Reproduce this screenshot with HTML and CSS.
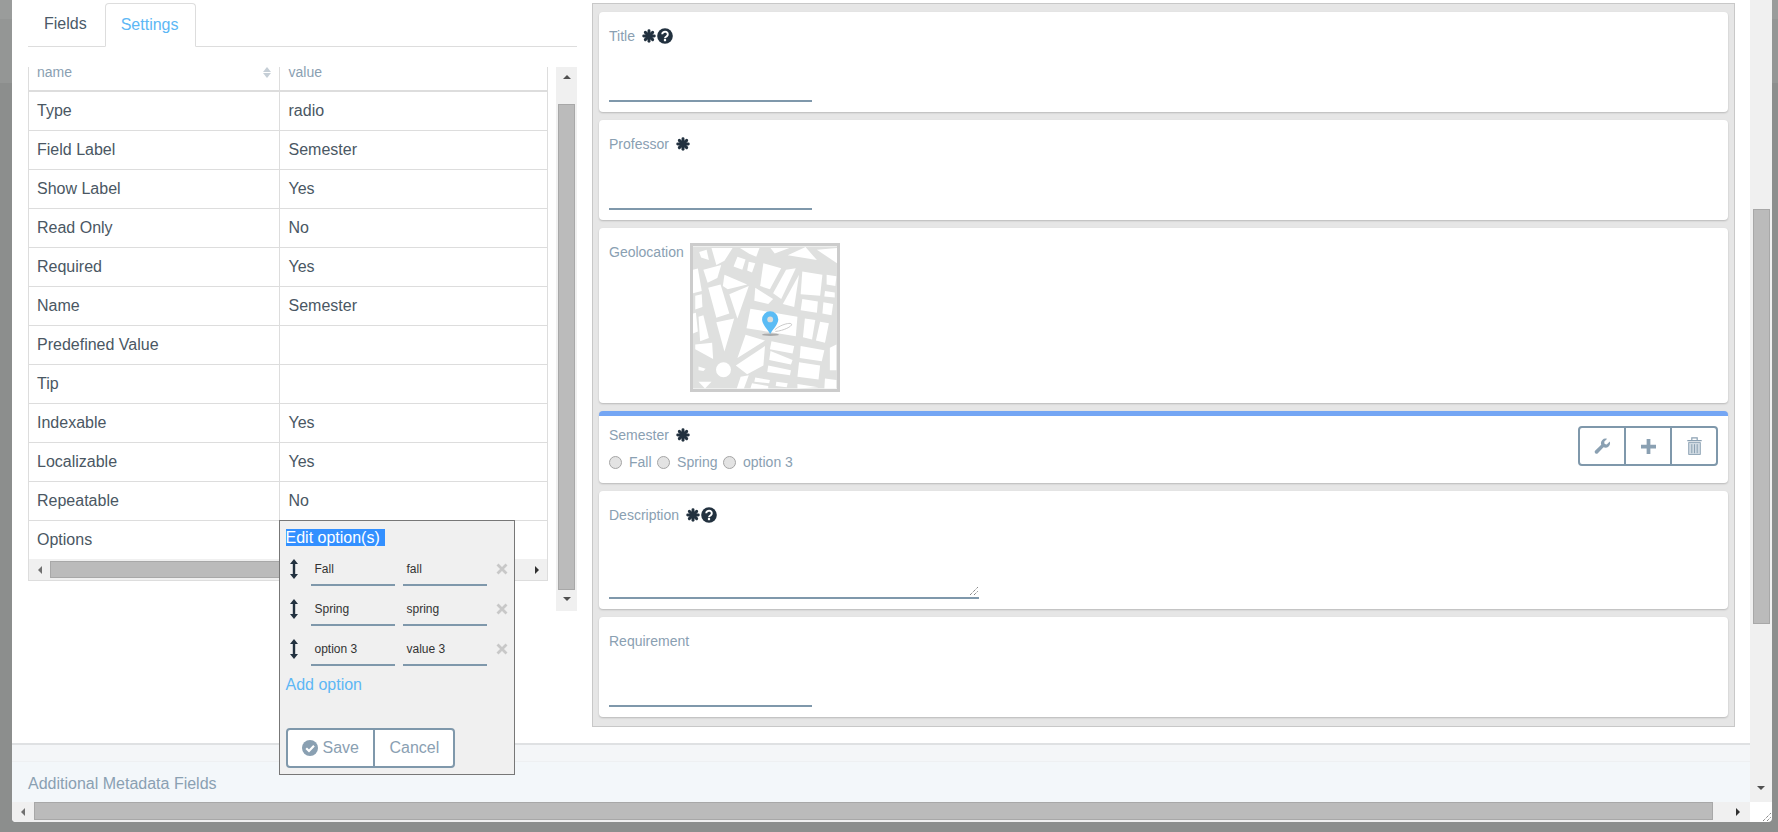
FILE: index.html
```html
<!DOCTYPE html>
<html lang="en">
<head>
    <meta charset="UTF-8">
    <meta name="viewport" content="width=device-width, initial-scale=1.0">
    <title>Form Editor</title>
    <link rel="stylesheet" href="styles.css">
</head>
<body>

    <svg class="defs" width="0" height="0">
        <symbol id="star" viewBox="0 0 16 16">
            <g stroke="#22313f" stroke-width="3.4" stroke-linecap="round">
                <line x1="8" y1="2" x2="8" y2="14"/>
                <line x1="2" y1="8" x2="14" y2="8"/>
                <line x1="3.8" y1="3.8" x2="12.2" y2="12.2"/>
                <line x1="12.2" y1="3.8" x2="3.8" y2="12.2"/>
            </g>
        </symbol>
        <symbol id="help" viewBox="0 0 16 16">
            <circle cx="8" cy="8" r="7.8" fill="#22313f"/>
            <path d="M5.2 6.3a2.8 2.6 0 1 1 4.4 2.1c-.9.6-1.6 1-1.6 1.8" fill="none" stroke="#fff" stroke-width="2"/>
            <rect x="6.9" y="11" width="2.2" height="2.2" fill="#fff"/>
        </symbol>
        <symbol id="move" viewBox="0 0 10 20">
            <path d="M5 0l4 5H6.2v10H9l-4 5-4-5h2.8V5H1z" fill="#22313f"/>
        </symbol>
        <symbol id="cross" viewBox="0 0 12 12">
            <path d="M1.5 1.5l9 9M10.500 1.500l-9 9" stroke="#c8c8c8" stroke-width="2.800"/>
        </symbol>
    </svg>

    <div class="modal">
        <div class="modal-view">
            <div class="editor">

                <div class="settings">
                    <div class="tabs">
                        <div class="tab">Fields</div>
                        <div class="tab tab-active">Settings</div>
                    </div>

                    <div class="table-area">
                        <div class="table-box">
                            <table class="prop-table">
                                <thead>
                                    <tr>
                                        <th class="col-name">name<span class="sort"></span></th>
                                        <th>value</th>
                                    </tr>
                                </thead>
                                <tbody>
                                    <tr><td>Type</td><td>radio</td></tr>
                                    <tr><td>Field Label</td><td>Semester</td></tr>
                                    <tr><td>Show Label</td><td>Yes</td></tr>
                                    <tr><td>Read Only</td><td>No</td></tr>
                                    <tr><td>Required</td><td>Yes</td></tr>
                                    <tr><td>Name</td><td>Semester</td></tr>
                                    <tr><td>Predefined Value</td><td></td></tr>
                                    <tr><td>Tip</td><td></td></tr>
                                    <tr><td>Indexable</td><td>Yes</td></tr>
                                    <tr><td>Localizable</td><td>Yes</td></tr>
                                    <tr><td>Repeatable</td><td>No</td></tr>
                                    <tr>
                                        <td>Options</td>
                                        <td class="options-cell">
                                            <div class="popover">
                                                <div class="pop-title"><span class="selected">Edit option(s)</span></div>
                                                <div class="opt-row">
                                                    <svg class="opt-move"><use href="#move"/></svg>
                                                    <span class="opt-input">Fall</span>
                                                    <span class="opt-input">fall</span>
                                                    <svg class="opt-del"><use href="#cross"/></svg>
                                                </div>
                                                <div class="opt-row">
                                                    <svg class="opt-move"><use href="#move"/></svg>
                                                    <span class="opt-input">Spring</span>
                                                    <span class="opt-input">spring</span>
                                                    <svg class="opt-del"><use href="#cross"/></svg>
                                                </div>
                                                <div class="opt-row">
                                                    <svg class="opt-move"><use href="#move"/></svg>
                                                    <span class="opt-input">option 3</span>
                                                    <span class="opt-input">value 3</span>
                                                    <svg class="opt-del"><use href="#cross"/></svg>
                                                </div>
                                                <div class="add-option">Add option</div>
                                                <div class="btn-group">
                                                    <div class="btn btn-save">
                                                        <svg class="save-icon" viewBox="0 0 16 16">
                                                            <circle cx="8" cy="8" r="8" fill="#8aa0b2"/>
                                                            <path d="M4.200 8.200l2.800 2.800 5-5.200" fill="none" stroke="#fff" stroke-width="2.200"/>
                                                        </svg>
                                                        Save
                                                    </div>
                                                    <div class="btn btn-cancel">Cancel</div>
                                                </div>
                                            </div>
                                        </td>
                                    </tr>
                                </tbody>
                            </table>
                            <div class="hbar hbar-table">
                                <span class="arrow arrow-left"></span>
                                <div class="hthumb"></div>
                                <span class="arrow arrow-right"></span>
                            </div>
                        </div>
                        <div class="vbar vbar-table">
                            <span class="arrow arrow-up"></span>
                            <div class="vthumb"></div>
                            <span class="arrow arrow-down"></span>
                        </div>
                    </div>
                </div>

                <div class="preview">
                    <div class="card">
                        <div class="field-label">Title <svg class="star"><use href="#star"/></svg><svg class="help"><use href="#help"/></svg></div>
                        <div class="line-input"></div>
                    </div>
                    <div class="card">
                        <div class="field-label">Professor <svg class="star"><use href="#star"/></svg></div>
                        <div class="line-input"></div>
                    </div>
                    <div class="card card-geo">
                        <div class="field-label">Geolocation</div>
                        <div class="map">
                            <svg width="144" height="143" viewBox="33 28 444 438">
                                <rect x="33" y="28" width="444" height="438" fill="#dfe0df"/>
                                <g fill="#fff">
                                    <polygon points="52,45 75,38 82,70 58,62"/>
                                    <polygon points="90,33 155,33 130,72 105,85"/>
                                    <polygon points="178,33 238,33 228,60 205,50"/>
                                    <polygon points="170,60 195,68 185,100 158,90"/>
                                    <polygon points="205,75 225,80 215,108 200,102"/>
                                    <polygon points="272,33 330,33 285,50"/>
                                    <polygon points="325,55 380,30 415,70"/>
                                    <polygon points="415,38 477,33 477,80"/>
                                    <polygon points="65,100 120,85 108,125 78,140"/>
                                    <polygon points="130,115 200,145 140,160 125,150"/>
                                    <polygon points="80,155 118,145 145,235 105,248"/>
                                    <polygon points="145,175 205,150 170,250"/>
                                    <polygon points="250,80 305,95 270,160 240,150"/>
                                    <polygon points="320,100 350,95 305,190 280,172"/>
                                    <polygon points="225,155 280,190 265,205 222,195"/>
                                    <polygon points="370,105 432,115 425,180 365,175"/>
                                    <polygon points="445,115 475,120 472,150 445,145"/>
                                    <polygon points="440,165 470,170 470,185 438,182"/>
                                    <polygon points="370,190 418,198 415,232 365,225"/>
                                    <polygon points="435,200 465,205 460,240 432,235"/>
                                    <polygon points="360,115 345,215 310,205"/>
                                    <polygon points="210,220 355,245 350,305 198,280"/>
                                    <polygon points="378,250 410,255 400,315 372,308"/>
                                    <polygon points="425,260 452,265 440,325 412,318"/>
                                    <polygon points="40,180 60,175 62,215 40,222"/>
                                    <polygon points="50,245 65,240 82,310 55,320"/>
                                    <polygon points="105,262 160,250 130,352"/>
                                    <polygon points="195,300 255,318 170,372"/>
                                    <polygon points="40,330 92,325 95,375 40,345"/>
                                    <polygon points="275,320 345,335 340,358 270,345"/>
                                    <polygon points="365,335 438,348 430,382 362,372"/>
                                    <polygon points="272,350 340,378 335,392 268,378"/>
                                    <polygon points="265,395 335,410 332,425 262,415"/>
                                    <polygon points="360,385 425,395 420,438 355,430"/>
                                    <polygon points="455,340 475,330 475,410 455,410"/>
                                    <polygon points="255,335 250,395 200,422 165,395"/>
                                    <polygon points="50,398 72,405 65,412 50,410"/>
                                    <polygon points="180,430 205,425 190,466 168,466"/>
                                    <polygon points="225,432 270,440 268,450 222,445"/>
                                    <polygon points="290,445 325,450 322,462 288,458"/>
                                    <polygon points="355,452 420,462 355,466"/>
                                    <polygon points="440,435 475,440 475,466 438,466"/>
                                    <polygon points="50,445 90,445 70,466"/>
                                    <polygon points="215,450 265,458 265,466 210,466"/>
                                    <polygon points="33,100 48,96 60,165 33,172"/>
                                    <polygon points="33,235 42,232 48,290 33,296"/>
                                    <circle cx="127" cy="408" r="23"/>
                                </g>
                                <ellipse cx="272" cy="300" rx="26" ry="4" fill="#a9a9a9"/>
                                <path d="M285 285c15-15 50-25 52-17 2 6-25 20-50 22" fill="none" stroke="#c8c8c8" stroke-width="3"/>
                                <path d="M271 298c-6-12-25-30-25-45a25 25 0 0 1 50 0c0 15-19 33-25 45z" fill="#5bbcf5"/>
                                <circle cx="271" cy="253" r="9" fill="#dcdddc"/>
                            </svg>
                        </div>
                    </div>
                    <div class="card card-active">
                        <div class="radio-col">
                            <div class="field-label">Semester <svg class="star"><use href="#star"/></svg></div>
                            <div class="radios">
                                <span class="radio"></span><span class="radio-text">Fall</span>
                                <span class="radio"></span><span class="radio-text">Spring</span>
                                <span class="radio"></span><span class="radio-text">option 3</span>
                            </div>
                        </div>
                        <div class="actions">
                            <div class="action">
                                <svg width="17" height="17" viewBox="0 0 20 20"><path d="M18.500 4l-3.500 3.500-2.500-.5-.5-2.500L15.500 1a5.500 5.500 0 0 0-7 7L1.500 14.800a2.100 2.100 0 0 0 3 3L11.200 11a5.500 5.500 0 0 0 7.300-7z" fill="#8aa0b2"/></svg>
                            </div>
                            <div class="action">
                                <svg width="15" height="15" viewBox="0 0 16 16"><path d="M6 0h4v6h6v4h-6v6H6v-6H0V6h6z" fill="#8aa0b2"/></svg>
                            </div>
                            <div class="action">
                                <svg width="15" height="18" viewBox="0 0 16 20">
                                    <path d="M0 4h16M5 4V1h6v3" fill="none" stroke="#8aa0b2" stroke-width="1.300"/>
                                    <path d="M1.500 6h13v13.500h-13z" fill="#d0dae2" stroke="#8aa0b2"/>
                                    <path d="M5 8v10M8 8v10M11 8v10" stroke="#8aa0b2" stroke-width="1.100"/>
                                </svg>
                            </div>
                        </div>
                    </div>
                    <div class="card">
                        <div class="field-label">Description <svg class="star"><use href="#star"/></svg><svg class="help"><use href="#help"/></svg></div>
                        <div class="line-input line-area">
                            <svg class="grip" width="8" height="8" viewBox="0 0 8 8"><path d="M0 8l8-8M4 8l4-4" stroke="#555" stroke-dasharray="1 1"/></svg>
                        </div>
                    </div>
                    <div class="card">
                        <div class="field-label">Requirement</div>
                        <div class="line-input"></div>
                    </div>
                </div>
            </div>

            <div class="footer-gap"></div>
            <div class="meta-header">Additional Metadata Fields</div>
        </div>

        <div class="vbar vbar-page">
            <div class="vthumb"></div>
            <span class="arrow arrow-down"></span>
        </div>
        <div class="hbar hbar-page">
            <span class="arrow arrow-left"></span>
            <div class="hthumb"></div>
            <span class="arrow arrow-right"></span>
        </div>
        <div class="corner">
            <svg width="8" height="8" viewBox="0 0 8 8"><path d="M0 8l8-8M4 8l4-4" stroke="#555" stroke-dasharray="1 1"/></svg>
        </div>
    </div>

</body>
</html>
```

FILE: styles.css
```css
* {
    box-sizing: border-box;
}
body {
    margin: 0;
    width: 1778px;
    height: 832px;
    padding-left: 12px;
    overflow: hidden;
    font-family: "Liberation Sans", Arial, sans-serif;
    background: linear-gradient(#9a9c9b 0, #9a9c9b 19px, #949695 19px, #949695 83px, #8c8e8d 83px);
}
.defs {
    position: absolute;
}

/* modal shell */
.modal {
    width: 1760px;
    height: 822px;
    background-color: white;
    border-radius: 0 0 4px 4px;
    display: grid;
    grid-template-columns: 1738px 22px;
    grid-template-rows: 802px 20px;
}
.modal-view {
    display: flex;
    flex-direction: column;
}
.editor {
    height: 743px;
    padding-left: 16px;
    display: flex;
    gap: 15px;
    align-items: flex-start;
}
.footer-gap {
    height: 19px;
    background-color: #f4f6f8;
    border-top: 2px solid #dfe1e3;
    border-bottom: 1px solid #eef0f2;
}
.meta-header {
    height: 40px;
    padding: 12px 16px;
    font-size: 16px;
    line-height: 20px;
    color: #8aa0b2;
    background-color: #f3f7fa;
}

/* tabs */
.settings {
    width: 549px;
}
.tabs {
    height: 47px;
    padding-top: 3px;
    display: flex;
    gap: 2px;
    border-bottom: 1px solid #ddd;
}
.tab {
    height: 44px;
    padding: 0 16px;
    font-size: 16px;
    line-height: 42px;
    color: #4a5a68;
}
.tab-active {
    width: 91px;
    padding: 0 15px;
    color: #5db7f5;
    background-color: white;
    border: 1px solid #ddd;
    border-bottom-color: white;
    border-radius: 4px 4px 0 0;
}

/* settings table */
.table-area {
    margin-top: 20px;
    display: flex;
    gap: 8px;
    align-items: flex-start;
}
.table-box {
    width: 520px;
    border: 1px solid #ddd;
    border-top: none;
}
.prop-table {
    width: 100%;
    table-layout: fixed;
    border-collapse: collapse;
    font-size: 16px;
    color: #4a5763;
}
.prop-table th {
    height: 24px;
    padding: 0 9px 14px;
    font-size: 14px;
    font-weight: normal;
    line-height: 8px;
    text-align: left;
    color: #8aa0b2;
    border-bottom: 2px solid #ddd;
}
.prop-table th:first-child {
    padding-left: 8px;
    border-right: 1px solid #ddd;
}
.prop-table .col-name {
    width: 250px;
    position: relative;
}
.sort {
    position: absolute;
    left: 234px;
    top: 0;
    width: 0;
    height: 0;
    border: 4px solid transparent;
    border-top: none;
    border-bottom: 5px solid #c5ced6;
}
.sort::after {
    content: "";
    position: absolute;
    left: -4px;
    top: 6px;
    border: 4px solid transparent;
    border-bottom: none;
    border-top: 5px solid #c5ced6;
}
.prop-table td {
    height: 39px;
    padding: 0 9px;
    border-bottom: 1px solid #ddd;
}
.prop-table td:first-child {
    padding-left: 8px;
    border-right: 1px solid #ddd;
}
.prop-table tr:last-child td {
    border-bottom: none;
}
.options-cell {
    position: relative;
}

/* popover for editing the options */
.popover {
    position: absolute;
    left: -1px;
    top: -1px;
    z-index: 5;
    width: 236px;
    height: 255px;
    padding: 8px 6px;
    background-color: #f0f0f0;
    border: 1px solid #777;
}
.pop-title {
    height: 17px;
    line-height: 17px;
}
.selected {
    padding-right: 5px;
    color: white;
    background-color: #3390ff;
}
.opt-row {
    height: 40px;
    display: flex;
    align-items: flex-end;
}
.opt-move {
    width: 10px;
    height: 20px;
    margin: 0 12px 7px 3px;
}
.opt-input {
    width: 84px;
    height: 34px;
    margin-right: 8px;
    padding-left: 4px;
    font-size: 12px;
    line-height: 34px;
    color: #333;
    border-bottom: 2px solid #7f98ab;
}
.opt-del {
    width: 12px;
    height: 12px;
    margin: 0 0 11px 1px;
}
.add-option {
    margin-top: 10px;
    line-height: 18px;
    color: #5db7f5;
}
.btn-group {
    width: 169px;
    height: 40px;
    margin-top: 34px;
    display: flex;
    overflow: hidden;
    background-color: white;
    border: 2px solid #7f98ab;
    border-radius: 4px;
    color: #8aa0b2;
}
.btn {
    display: flex;
    align-items: center;
    padding-left: 15px;
    gap: 5px;
}
.btn-save {
    width: 87px;
    padding-left: 14px;
    border-right: 2px solid #7f98ab;
}
.save-icon {
    width: 16px;
    height: 16px;
}

/* scrollbars */
.vbar {
    background-color: #f0f0f0;
    display: flex;
    flex-direction: column;
    align-items: center;
}
.hbar {
    background-color: #f0f0f0;
    display: flex;
    align-items: center;
}
.vthumb {
    width: 17px;
    background-color: #bbb;
    border: 1px solid #a8a8a8;
}
.hthumb {
    height: 17px;
    background-color: #bbb;
    border: 1px solid #a8a8a8;
}
.arrow {
    width: 0;
    height: 0;
    border: 4px solid transparent;
}
.arrow-up {
    margin-top: 8px;
    border-top: none;
    border-bottom: 4px solid #505050;
}
.arrow-down {
    border-bottom: none;
    border-top: 4px solid #505050;
}
.arrow-left {
    border-left: none;
    border-right: 4px solid #707070;
}
.arrow-right {
    border-right: none;
    border-left: 4px solid #303030;
}
.vbar-table {
    width: 21px;
    height: 544px;
}
.vbar-table .vthumb {
    height: 486px;
    margin-top: 25px;
    margin-bottom: 7px;
}
.hbar-table {
    height: 21px;
    padding-left: 9px;
}
.hbar-table .hthumb {
    width: 400px;
    margin: 0 85px 0 8px;
}
.vbar-page {
    height: 802px;
}
.vbar-page .vthumb {
    height: 415px;
    margin-top: 209px;
    margin-bottom: 162px;
}
.hbar-page {
    height: 20px;
    padding-left: 9px;
    border-radius: 0 0 0 4px;
}
.hbar-page .hthumb {
    width: 1679px;
    height: 18px;
    margin: 0 23px 2px 9px;
}
.corner {
    display: flex;
    justify-content: flex-end;
    align-items: flex-end;
    padding: 0 1px 1px 0;
}

/* form preview on the right */
.preview {
    width: 1143px;
    margin-top: 3px;
    padding: 8px 6px 9px;
    display: flex;
    flex-direction: column;
    gap: 8px;
    background-color: #e6e6e6;
    border: 1px solid #c8c8c8;
}
.card {
    padding: 14px 10px 10px;
    background-color: white;
    border-radius: 4px;
    box-shadow: 0 1px 2px rgba(0,0,0,0.2);
}
.field-label {
    height: 20px;
    font-size: 14px;
    line-height: 20px;
    color: #8aa0b2;
    display: flex;
    align-items: center;
}
.star {
    width: 14px;
    height: 14px;
    margin-left: 7px;
}
.help {
    width: 16px;
    height: 16px;
    margin-left: 1px;
}
.line-input {
    width: 203px;
    height: 56px;
    border-bottom: 2px solid #7f98ab;
}
.line-area {
    position: relative;
    width: 370px;
    height: 74px;
}
.grip {
    position: absolute;
    right: 1px;
    bottom: 2px;
}
.card-geo {
    padding-bottom: 11px;
    display: flex;
    gap: 6px;
    align-items: flex-start;
}
.map {
    width: 150px;
    height: 149px;
    margin-top: 1px;
    border: 3px solid #ccc;
}
.map svg {
    display: block;
}
.card-active {
    padding: 9px 10px 11px;
    border-top: 5px solid #74a6f4;
    display: flex;
    justify-content: space-between;
}
.radios {
    height: 20px;
    margin-top: 7px;
    display: flex;
    align-items: center;
    font-size: 14px;
    color: #8aa0b2;
}
.radio {
    width: 13px;
    height: 13px;
    margin-right: 7px;
    border: 1px solid #a5a5a5;
    border-radius: 50%;
    background-color: #e3e3e3;
}
.radio-text {
    margin-right: 5.5px;
}
.actions {
    width: 140px;
    height: 40px;
    margin-top: 1px;
    display: flex;
    background-color: white;
    border: 2px solid #7f98ab;
    border-radius: 4px;
}
.action {
    flex: 1;
    display: flex;
    align-items: center;
    justify-content: center;
    border-right: 2px solid #7f98ab;
}
.action:last-child {
    border-right: none;
}
```
